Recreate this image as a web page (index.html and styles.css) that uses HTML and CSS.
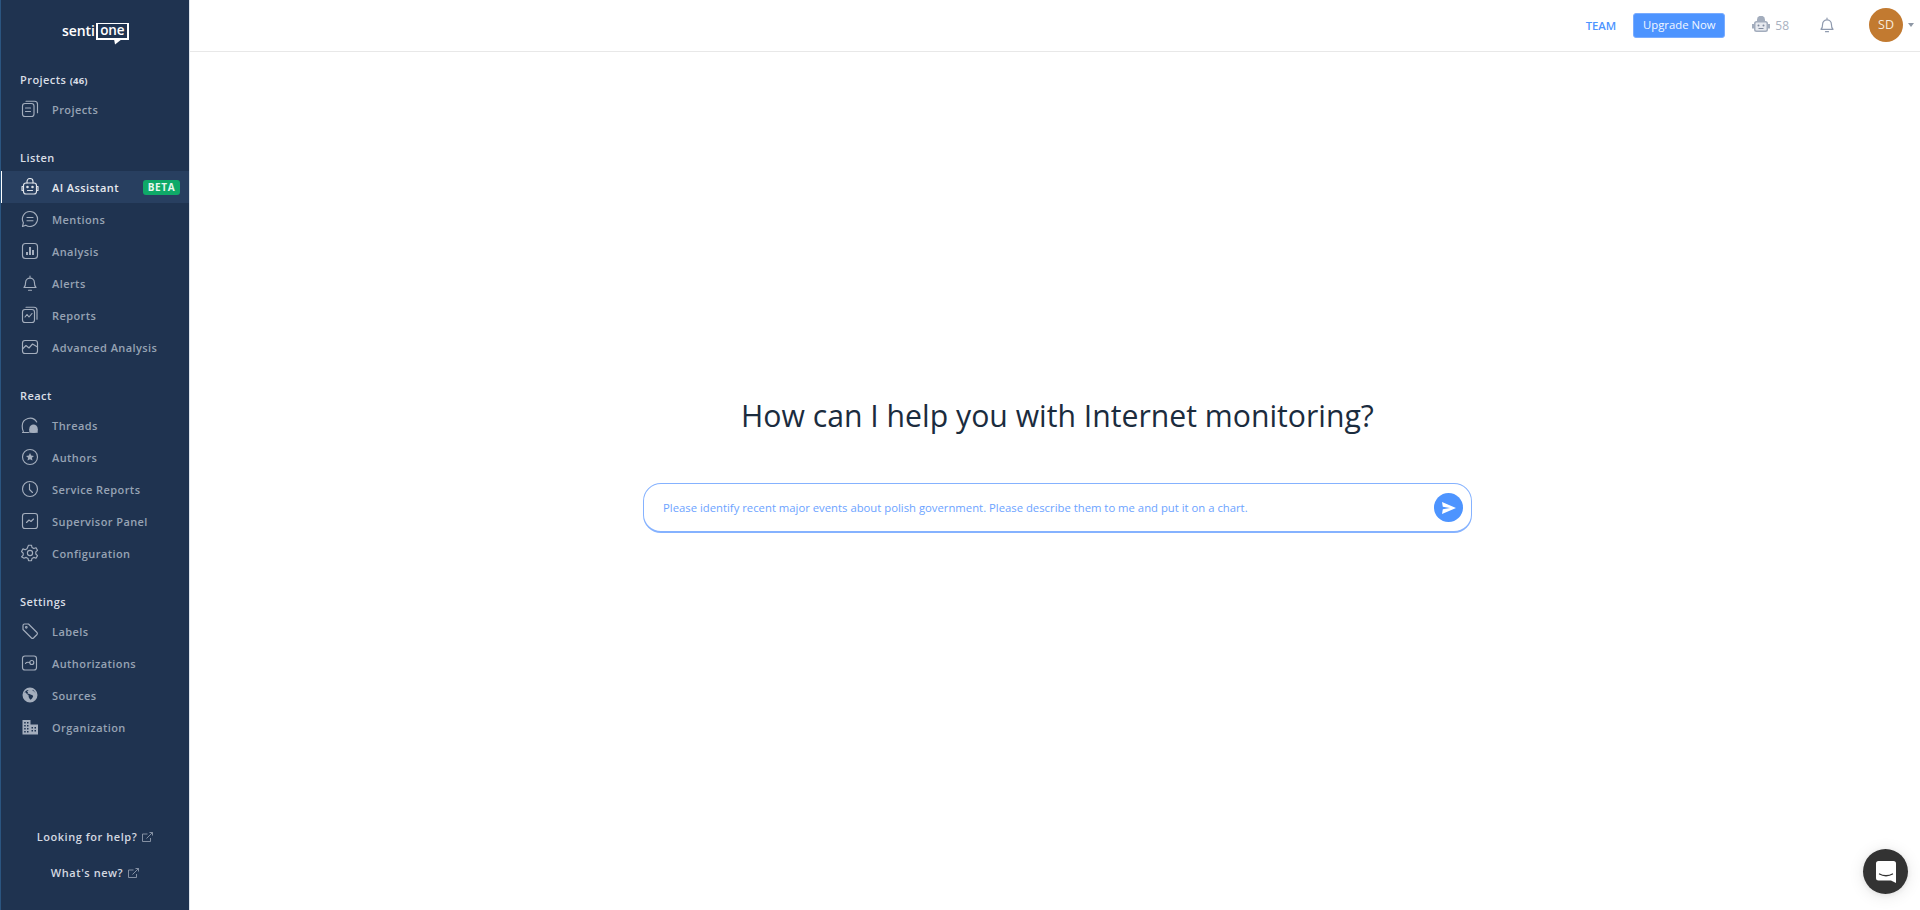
FILE: index.html
```html
<!DOCTYPE html>
<html lang="en">
<head>
<meta charset="utf-8">
<title>SentiOne AI Assistant</title>
<link rel="stylesheet" href="styles.css">
</head>
<body>
<div class="app">
  <aside class="sidebar">
    <div class="logo">
      <span class="logo-senti">senti</span>
      <span class="logo-box">one
        <svg class="logo-tail" viewBox="0 0 8 6" width="8" height="6"><path d="M0 0H8L1 5.500z" fill="#fff"/></svg>
      </span>
    </div>

    <section class="nav-section nav-first">
      <h3 class="nav-title">Projects <small>(46)</small></h3>
      <a class="nav-item"><svg class="ico" viewBox="0 0 18 18"><rect x="1.500" y="3.500" width="11.500" height="13" rx="2.500"/><path d="M5 1.200h8.500a3 3 0 0 1 3 3v8.500M4.500 8h5M4.500 11.500h5"/></svg><span>Projects</span></a>
    </section>

    <section class="nav-section">
      <h3 class="nav-title">Listen</h3>
      <a class="nav-item active"><svg class="ico" viewBox="0 0 18 18"><rect x="2.500" y="5" width="13" height="11" rx="2.500"/><path d="M6 5V3.500a3 3 0 0 1 6 0V5M2.500 8.500H1v4h1.500M15.500 8.500H17v4h-1.500M6.500 12.500h5" /><circle cx="6.500" cy="9" r=".7"/><circle cx="11.500" cy="9" r=".7"/></svg><span>AI Assistant</span><b class="beta">BETA</b></a>
      <a class="nav-item"><svg class="ico" viewBox="0 0 18 18"><path d="M9 1.500a7.500 7.500 0 1 1-4.200 13.700L1.500 16.500l.9-3.800A7.500 7.500 0 0 1 9 1.500zM6 7.500h6M6 10.700h6"/></svg><span>Mentions</span></a>
      <a class="nav-item"><svg class="ico" viewBox="0 0 18 18"><rect x="1.500" y="1.500" width="15" height="15" rx="3"/><path class="thick" d="M6 13v-3M9 13V5M12 13V8"/></svg><span>Analysis</span></a>
      <a class="nav-item"><svg class="ico" viewBox="0 0 18 18"><path d="M3 13.500c1.300-1.200 1.600-2.500 1.600-5a4.400 4.400 0 0 1 8.800 0c0 2.500.3 3.800 1.600 5zM9 4V2M7.500 16.200h3"/></svg><span>Alerts</span></a>
      <a class="nav-item"><svg class="ico" viewBox="0 0 18 18"><rect x="1.500" y="3.500" width="12" height="13" rx="2.500"/><path d="M5 1.200h8a3 3 0 0 1 3 3v9M4 11l2-2.500 2 2.500 3-3.500"/></svg><span>Reports</span></a>
      <a class="nav-item"><svg class="ico" viewBox="0 0 18 18"><rect x="1.500" y="2.500" width="15" height="13" rx="2.500"/><path d="M1.500 11l3.500-3.500 3 2.500 3.500-4 5 3"/></svg><span>Advanced Analysis</span></a>
    </section>

    <section class="nav-section">
      <h3 class="nav-title">React</h3>
      <a class="nav-item"><svg class="ico" viewBox="0 0 18 18"><path d="M2.300 15.500C1.600 14 1.200 12 1.200 10a7.800 7.800 0 0 1 14.500-4"/><path d="M1.500 16.500h6"/><circle class="fill" cx="12.500" cy="12.800" r="4.200"/><rect class="fill" x="8.300" y="13" width="8.400" height="3.800"/></svg><span>Threads</span></a>
      <a class="nav-item"><svg class="ico" viewBox="0 0 18 18"><circle cx="9" cy="9" r="7.500"/><path class="fill" d="M9 5l1.200 2.600 2.800.3-2.100 1.900.6 2.800L9 11.200l-2.500 1.400.6-2.800L5 7.900l2.800-.3z"/></svg><span>Authors</span></a>
      <a class="nav-item"><svg class="ico" viewBox="0 0 18 18"><circle cx="9" cy="9" r="7.500"/><path d="M8.500 4v5.500l3 3"/></svg><span>Service Reports</span></a>
      <a class="nav-item"><svg class="ico" viewBox="0 0 18 18"><rect x="1.500" y="1.500" width="15" height="15" rx="2.500"/><path d="M5.500 10.500l2.500-2.500 2 1.500 2.500-2.500"/></svg><span>Supervisor Panel</span></a>
      <a class="nav-item"><svg class="ico" viewBox="0 0 18 18"><circle cx="9" cy="9" r="2.600"/><path d="M7.500 1.200h3l.5 2.300 1.800 1 2.200-.8 1.500 2.600-1.700 1.600v2.100l1.700 1.600-1.500 2.600-2.200-.8-1.800 1-.5 2.300h-3l-.5-2.300-1.800-1-2.200.8L.5 12.800l1.700-1.600V9.100L.5 7.500 2 4.900l2.200.8 1.800-1z"/></svg><span>Configuration</span></a>
    </section>

    <section class="nav-section">
      <h3 class="nav-title">Settings</h3>
      <a class="nav-item"><svg class="ico" viewBox="0 0 18 18"><path d="M2 3.500a1.500 1.500 0 0 1 1.500-1.500h4L16 10.500a1.500 1.500 0 0 1 0 2L12.500 16a1.500 1.500 0 0 1-2 0L2 7.500z"/><circle cx="5.300" cy="5.300" r=".8"/></svg><span>Labels</span></a>
      <a class="nav-item"><svg class="ico" viewBox="0 0 18 18"><rect x="1.500" y="2" width="14" height="14" rx="2.500"/><circle cx="10.800" cy="8.500" r="2"/><path d="M4.500 9.500c1-1.500 2-1.500 4-1"/></svg><span>Authorizations</span></a>
      <a class="nav-item"><svg class="ico solid" viewBox="0 0 18 18"><path fill-rule="evenodd" d="M9 1.500a7.500 7.500 0 1 1 0 15 7.500 7.500 0 0 1 0-15zM3.500 6c1 .3 1.500.8 2 1.500.6.800 1.500 1 2 1.800.3.800 0 1.500.5 2.400.3.700.9 1.500 1.500 2 .5-.4 1.500-1 1.800-1.800.2-.6.800-1 .8-1.700 0-.8-1-1.400-1.900-1.500-1-.2-1.500-1-2.500-1-.5 0-.8.300-1.200 0-.2-.5.700-.8.500-1.300-.2-.4-.8-.2-1-.6.200-.8 1.400-.8 1.500-1.700-1.800.1-3.400 1-4 2.900zM11.500 3.800c-.1.700.5 1.200 1.200 1.500.8.300 1.500 1.200 2 2.500-.4-1.800-1.500-3.200-3.200-4z"/></svg><span>Sources</span></a>
      <a class="nav-item"><svg class="ico solid" viewBox="0 0 18 18"><path fill-rule="evenodd" d="M1.500 2h8v4.500h7.500v10H1.500zM3.200 4v1.500h1.500V4zM6 4v1.500h1.500V4zM3.200 7v1.500h1.500V7zM6 7v1.500h1.500V7zM3.200 10v1.500h1.500V10zM6 10v1.500h1.500V10zM3.200 13v1.500h1.500V13zM6 13v1.500h1.500V13zM10.500 9v1.500H12V9zM13.500 9v1.500H15V9zM10.500 12v1.500H12V12zM13.500 12v1.500H15V12z"/></svg><span>Organization</span></a>
    </section>

    <div class="side-links">
      <a class="side-link">Looking for help? <svg class="ext" viewBox="0 0 11 11"><path d="M8.500 6v3.500h-8v-7.500h5M4.500 6.500l6-6M7.500.5h3v3"/></svg></a>
      <a class="side-link">What's new? <svg class="ext" viewBox="0 0 11 11"><path d="M8.500 6v3.500h-8v-7.500h5M4.500 6.500l6-6M7.500.5h3v3"/></svg></a>
    </div>
  </aside>

  <div class="main">
    <header class="topbar">
      <a class="team">TEAM</a>
      <button class="upgrade">Upgrade Now</button>
      <span class="robot">
        <svg viewBox="0 0 18 18" width="18" height="18"><path fill="#a3adbd" d="M5 5V3.800a4 4 0 0 1 8 0V5h.5A2.500 2.500 0 0 1 16 7.500V8h2v4.500h-2v1a2.500 2.500 0 0 1-2.500 2.500h-9A2.500 2.500 0 0 1 2 13.500v-1H0V8h2v-.5A2.500 2.500 0 0 1 4.500 5z"/><rect x="3.500" y="6.500" width="11" height="8" rx="1.200" fill="#e6e9ef"/><circle cx="6.500" cy="9.500" r="1" fill="#7f8a9e"/><circle cx="11.500" cy="9.500" r="1" fill="#7f8a9e"/><path d="M6.500 12.500h5" stroke="#7f8a9e" stroke-width="1"/></svg>
        58
      </span>
      <svg class="bell" viewBox="0 0 14 16" width="14" height="16"><path d="M1 12.300c1.100-1 1.600-2.400 1.600-5a4.400 4.400 0 0 1 8.800 0c0 2.600.5 4 1.600 5zM7 2.800V1M5.500 14.700h3"/></svg>
      <span class="avatar">SD</span>
      <span class="caret"></span>
    </header>

    <main class="content">
      <h1 class="headline">How can I help you with Internet monitoring?</h1>
      <div class="prompt">
        <span class="prompt-text">Please identify recent major events about polish government. Please describe them to me and put it on a chart.</span>
        <span class="send"><svg viewBox="0 0 14 12" width="14" height="12"><path fill="#fff" d="M0 0l14 6-14 6 .8-4.800L8 6 .8 4.800z"/></svg></span>
      </div>
    </main>
  </div>
</div>
<button class="chat" aria-label="Chat"><svg viewBox="0 0 20 22" width="20" height="22"><path fill="#fff" d="M2.500 0h15A2.500 2.500 0 0 1 20 2.500V22l-5-2.500H2.500A2.500 2.500 0 0 1 0 17V2.500A2.500 2.500 0 0 1 2.500 0z"/><path d="M3.500 13c3.500 2.300 9.500 2.300 13 0" fill="none" stroke="#333" stroke-width="1.300" stroke-linecap="round"/></svg></button>
</body>
</html>
```
FILE: styles.css
```css
* { box-sizing: border-box; }
html, body { margin: 0; height: 100%; overflow: hidden; background: #fff; }
body { font-family: "Open Sans", sans-serif; color: #1c2d3f; }
a { text-decoration: none; }

.app { display: flex; height: 910px; }

.sidebar {
  width: 190px; flex: none; height: 910px; display: flex; flex-direction: column;
  background: #1f3350; border-left: 1px solid #2b5580; border-right: 1px solid #dfe5ec;
}
.logo { display: flex; align-items: flex-start; height: 64px; padding: 19px 0 0 61px; color: #fff; }
.logo-senti { font: 600 14px/24px "Open Sans", sans-serif; letter-spacing: -.1px; }
.logo-box {
  position: relative; width: 33px; height: 17px; margin-left: 1px; margin-top: 4px;
  border: 2px solid #fff; border-top-width: 1.500px; font: 600 13.500px/12px "Open Sans", sans-serif; text-align: center; letter-spacing: -.2px;
}
.logo-tail { position: absolute; left: 16px; top: 15px; }

.nav-section { margin-top: 22px; }
.nav-first { margin-top: 5px; }
.nav-title {
  margin: 0 0 2px 19px; height: 22px; font-size: 11px; line-height: 22px; font-weight: 600;
  letter-spacing: .44px; color: #d9dee5;
}
.nav-title small { font-size: 9.500px; font-weight: 700; letter-spacing: .2px; }
.nav-item {
  display: flex; align-items: center; height: 32px; padding-left: 20px;
  font-size: 11px; font-weight: 600; letter-spacing: .42px; color: #97a3b4;
}
.nav-item span { margin-left: 13px; }
.nav-item.active { background: #283f60; color: #e6e9ee; box-shadow: inset 1px 0 0 #fff; }
.ico {
  width: 18px; height: 18px; flex: none; fill: none; stroke: #a4aebd; stroke-width: 1.150;
  stroke-linecap: round; stroke-linejoin: round;
}
.ico .thick { stroke-width: 2; stroke-linecap: butt; }
.ico .fill, .ico.solid path { fill: #a4aebd; stroke: none; }
.active .ico { stroke: #e0e4ea; }
.beta {
  margin-left: auto; margin-right: 9px; width: 37px; height: 15px; border-radius: 3px;
  background: #0fa968; color: #e9f7ef; font-size: 10px; line-height: 15px; font-weight: 700;
  letter-spacing: .6px; text-align: center;
}

.side-links { margin-top: auto; padding-bottom: 28px; display: flex; flex-direction: column; align-items: center; gap: 18px; }
.side-link { font-size: 11px; line-height: 18px; font-weight: 600; letter-spacing: .55px; color: #d4d9e0; display: flex; align-items: center; }
.ext { width: 11px; height: 11px; margin-left: 5px; fill: none; stroke: #8f9aab; stroke-width: .9; }

.main { flex: 1; min-width: 0; display: flex; flex-direction: column; }
.topbar {
  height: 52px; flex: none; border-bottom: 1px solid #e8e8e8; display: flex; align-items: center;
  padding: 0 6px 1px 0; justify-content: flex-end;
}
.team { font-size: 11.300px; font-weight: 600; color: #4d94ff; margin-right: 17px; }
.upgrade {
  width: 92px; height: 25px; border: 1px solid #79acff; border-radius: 3px; background: #4d94ff;
  color: #f2f7ff; font: 400 11.300px/1 "Open Sans", sans-serif; padding: 0; margin-right: 27px;
}
.robot { display: flex; align-items: center; gap: 5px; color: #a9b1bf; font-size: 12px; margin-right: 31px; }
.bell { fill: none; stroke: #8f9aae; stroke-width: 1.200; stroke-linecap: round; stroke-linejoin: round; margin-right: 35px; }
.avatar {
  width: 34px; height: 34px; border-radius: 50%; background: #c27a30; color: #f6ebdd;
  font-size: 12.500px; line-height: 34px; text-align: center;
}
.caret { width: 0; height: 0; margin-left: 5px; border: 3px solid transparent; border-top: 4px solid #8e97a5; border-bottom: 0; }

.content { flex: 1; display: flex; flex-direction: column; align-items: center; padding: 341px 0 0 5px; }
.headline { margin: 0; font-size: 30.200px; line-height: 46px; font-weight: 400; color: #1b2c3e; }
.prompt {
  margin-top: 44px; width: 829px; height: 50px; display: flex; align-items: center;
  border: 1px solid #85b2ff; border-bottom-width: 2px; border-radius: 18px; padding: 0 8px 0 19px;
}
.prompt-text { flex: 1; font-size: 11.300px; color: #6ca3ff; }
.send { width: 29px; height: 29px; border-radius: 50%; background: #4d94ff; display: flex; align-items: center; justify-content: center; }

.chat {
  position: fixed; right: 12px; bottom: 16px; width: 45px; height: 45px; border: 0; border-radius: 50%;
  background: #333; display: flex; align-items: center; justify-content: center; padding: 0;
  box-shadow: 0 1px 6px rgba(0,0,0,.08), 0 2px 16px rgba(0,0,0,.1);
}
```
